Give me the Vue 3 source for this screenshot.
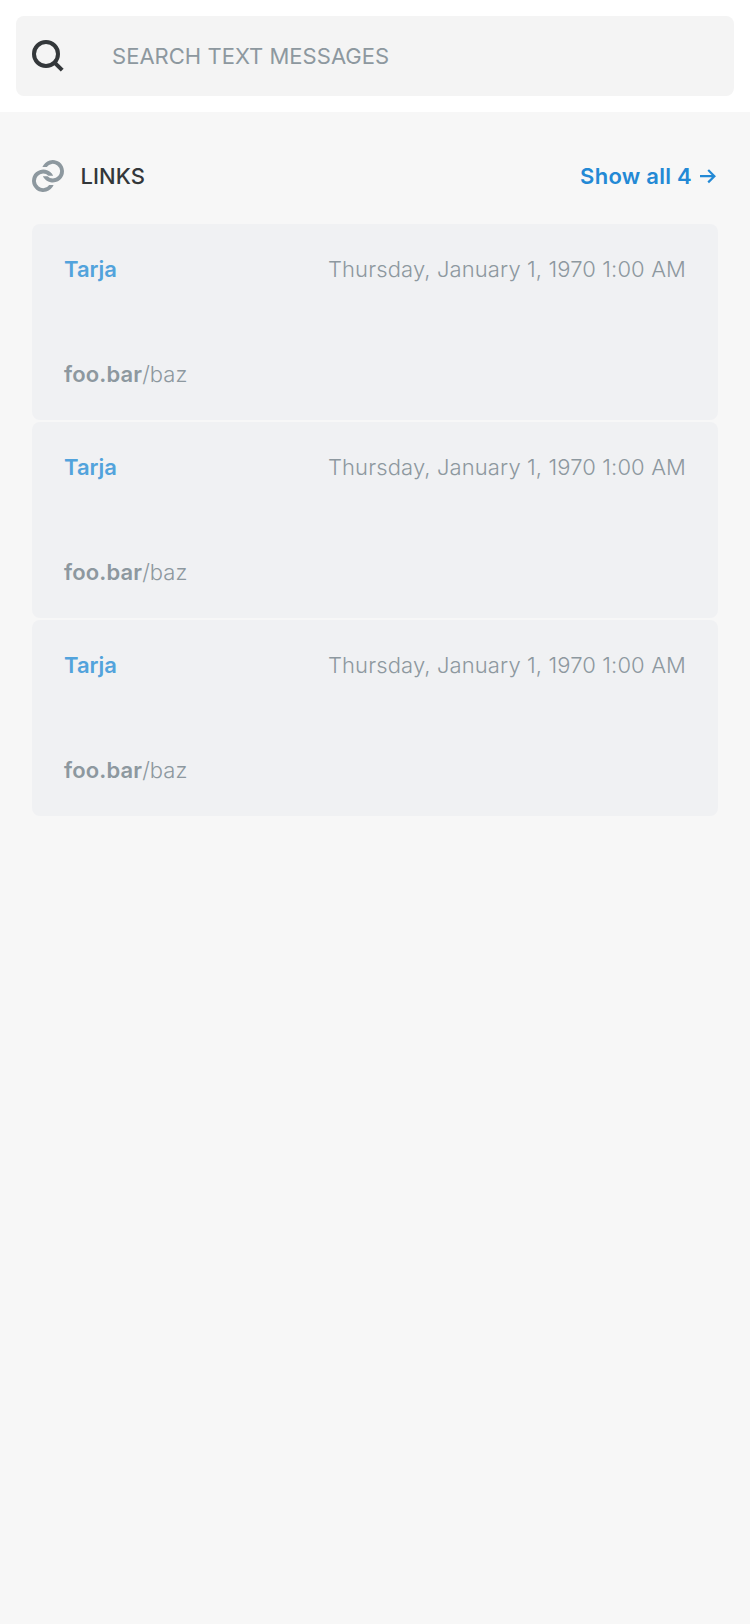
<script setup>
const messages = [1, 2, 3].map((id) => ({
  id,
  sender: 'Tarja',
  date: 'Thursday, January 1, 1970 1:00 AM',
  host: 'foo.bar',
  path: '/baz',
}))
</script>

<template>
  <div class="page">
    <header class="search">
      <div class="field">
        <svg class="icon" viewBox="0 0 32 32" fill="none" stroke="#33373a" stroke-width="4">
          <circle cx="14" cy="14" r="12" />
          <path d="M22.3 22.3 30.2 30.2" />
        </svg>
        <span class="placeholder">SEARCH TEXT MESSAGES</span>
      </div>
    </header>
    <section class="links">
      <div class="head">
        <svg class="icon" viewBox="0 0 32 32" fill="#8d989f">
          <path d="M10.4 7A11.2 11.2 0 1 1 10.8 16.3H15.6A7.3 7.3 0 1 0 14.8 7Z" />
          <path d="M21.6 25A11.2 11.2 0 1 1 21.2 15.7H16.4A7.3 7.3 0 1 0 17.2 25Z" />
        </svg>
        <h2 class="title">LINKS</h2>
        <a class="all"><span class="all-text">Show all 4</span><svg class="arrow" viewBox="0 0 16 16" fill="none" stroke="#2389d5" stroke-width="2.2"><path d="M0 8.2H14.5M8.2 2 14.4 8.2 8.2 14.4" /></svg></a>
      </div>
      <ul class="list">
        <li v-for="m in messages" :key="m.id" class="card">
          <div class="meta">
            <span class="sender">{{ m.sender }}</span>
            <time class="date">{{ m.date }}</time>
          </div>
          <div class="url"><b class="host">{{ m.host }}</b><span class="path">{{ m.path }}</span></div>
        </li>
      </ul>
    </section>
  </div>
</template>

<style>
body { background: #f7f7f7; }
</style>

<style scoped>
.page {
  min-height: 1624px;
  background: #f7f7f7;
  font-family: Inter, "Liberation Sans", sans-serif;
  font-size: 22px;
  line-height: 28px;
}
.search { background: #fff; padding: 16px; }
.field {
  height: 80px;
  box-sizing: border-box;
  padding: 0 16px;
  display: flex;
  align-items: center;
  border-radius: 8px;
  background: #f4f4f4;
}
.icon { width: 32px; height: 32px; display: block; flex: none; }
.placeholder { margin-left: 48px; color: #8d989f; letter-spacing: 0.02px; }
.links { padding: 48px 32px 0; }
.head { display: flex; align-items: center; height: 32px; }
.title { margin: 0 0 0 16.4px; font-size: 22px; font-weight: 550; letter-spacing: 0.1px; color: #33373a; }
.all { margin-left: auto; display: flex; align-items: center; color: #2389d5; font-weight: 570; letter-spacing: 0.27px; }
.arrow { width: 16px; height: 16px; margin: 0 2px 0 8px; }
.list { list-style: none; margin: 32px 0 0; padding: 0; display: grid; gap: 2px; }
.card {
  height: 196px;
  box-sizing: border-box;
  padding: 31px 32px 32px;
  border-radius: 8px;
  background: #f0f1f3;
  display: flex;
  flex-direction: column;
  justify-content: space-between;
  color: #8d989f;
}
.meta { display: flex; justify-content: space-between; }
.sender { font-weight: 600; color: #52a3dc; }
.date { font-weight: 300; letter-spacing: 0.12px; }
.host { font-weight: 600; letter-spacing: 0.15px; }
.path { font-weight: 300; }
</style>
